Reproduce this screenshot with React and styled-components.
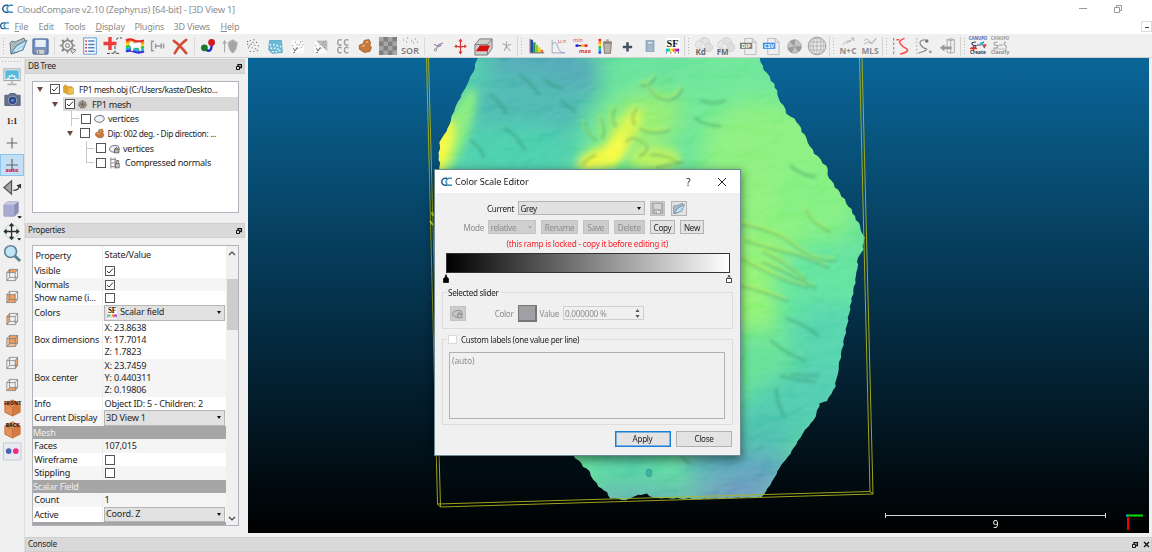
import React from 'react';
import styled, { createGlobalStyle, css } from 'styled-components';

const Global = createGlobalStyle`
  * { box-sizing: border-box; }
  body { margin: 0; background: #f0f0f0; overflow: hidden; font-family: "Noto Sans", "Open Sans", sans-serif; color: #262626; }
  svg { display: block; overflow: visible; }
  svg text { font-family: "Open Sans", "Noto Sans", sans-serif; }
`;

const Window = styled.div`
  width: 1152px; height: 552px; display: flex; flex-direction: column;
  overflow: hidden; background: #f0f0f0; white-space: nowrap;
`;
const TitleBar = styled.header`
  height: 18px; background: #fff; display: flex; align-items: center; padding-left: 2px;
  color: #8f8f8f; font-size: 9.4px; letter-spacing: -0.27px;
`;
const TitleText = styled.span`flex: 1; padding-left: 4px;`;
const WindowButtons = styled.div`
  display: flex; width: 80px; align-items: center; gap: 27px; padding-left: 6px; overflow: hidden;
  svg { flex: none; }
`;
const MenuBar = styled.nav`
  height: 16px; background: #fff; display: flex; align-items: center; color: #8c8c8c; font-size: 9px;
  letter-spacing: -0.2px;
`;
const MenuItem = styled.span`width: ${(p) => p.$w}px; u { text-underline-offset: 1px; }`;
const MdiButton = styled.span`
  margin-left: auto; width: 11px; height: 11px; border: 1px solid #dcdcdc; display: grid; place-items: center;
  i { width: 4px; height: 1px; background: #444; margin-top: 2px; }
`;
const ToolBar = styled.div`
  height: 24px; background: #f0f0f0; border-bottom: 1px solid #d0d0d0; display: flex; align-items: center;
`;
const Slot = styled.div`
  width: ${(p) => p.$w || 22.6}px; height: 22px; display: grid; place-items: center; flex: none; margin-top: 1px;
`;
const Divider = styled.i`width: 1px; height: 18px; background: #dadada; margin: 0 2px; flex: none;`;
const Grip = styled.i`
  width: ${(p) => p.$w || 9}px; height: 20px; flex: none; display: block;
  border-left: ${(p) => (p.$plain ? 'none' : '1px solid #d4d4d4')};
  background: repeating-linear-gradient(#b5b5b5 0 1px, transparent 1px 3px) 3px 2px / 1px 17px no-repeat;
`;

const Body = styled.main`flex: 1; display: flex; min-height: 0;`;
const SideBar = styled.aside`
  width: 25px; border-right: 1px solid #dedede; padding-top: 3px; display: flex; flex-direction: column; align-items: center;
  &::before { content: ""; width: 21px; height: 1px; margin-bottom: 4px; background: repeating-linear-gradient(90deg, #b5b5b5 0 1px, transparent 1px 3px); }
`;
const SideSlot = styled.div`
  width: ${(p) => (p.$on ? 24 : 20)}px; height: 22px; flex: none; display: grid; place-items: center;
  ${(p) => p.$on && css`background: #c3dff5; border: 1px solid #8cc4ec;`}
`;
const Right = styled.div`flex: 1; display: flex; flex-direction: column;`;
const Work = styled.div`height: 479px; display: flex;`;
const Docks = styled.section`width: 223px; padding-top: 1px; display: flex; flex-direction: column;`;
const DockHeader = styled.div`
  height: 15px; width: ${(p) => (p.$wide ? '100%' : '220px')}; background: #d9d9d9; border: 1px solid #cfcfcf;
  padding: 0 2px; font-size: 8.2px; letter-spacing: -0.3px; line-height: 1;
  display: flex; align-items: center; gap: 6px;
  span { flex: 1; }
`;
const TreeBox = styled.div`
  width: 207px; height: 132px; margin: 7px 0 10px 7px; background: #fff; border: 1px solid #b0b3bb;
`;
const TreeRow = styled.div`
  height: 14.7px; display: flex; align-items: center; padding-left: ${(p) => p.$indent}px;
  font-size: ${(p) => (p.$small ? 8.4 : 9.1)}px; letter-spacing: ${(p) => (p.$small ? -0.35 : -0.28)}px;
  background: ${(p) => (p.$sel ? `linear-gradient(90deg, #fff 30px, #d9d9d9 30px)` : 'none')};
  > svg { flex: none; }
`;
const Arrow = styled.i`
  width: 13px; flex: none;
  &::before { content: ""; display: block; width: 0; border: 3.5px solid transparent; border-top: 5px solid #6b4840; border-bottom: 0; }
`;
const Branch = styled.i`
  width: 10px; height: 15px; flex: none;
  background: linear-gradient(#c8c8c8, #c8c8c8) 0 0 / 1px ${(p) => (p.$end ? '8px' : '15px')} no-repeat,
    linear-gradient(#c8c8c8, #c8c8c8) 0 7px / 8px 1px no-repeat;
`;
const Box = styled.i`
  width: 10px; height: 10px; border: 1px solid #555; background: #fff; flex: none; display: grid; place-items: center;
`;
const TreeIcon = styled.span`width: ${(p) => p.$w || 14}px; margin: 0 0 0 3.5px; flex: none; display: grid; place-items: center start;`;
const PropBox = styled.div`
  width: 207px; height: 281px; margin: 7px 0 0 7px; background: #fff; border: 1px solid #b0b3bb;
  display: flex; overflow: hidden; font-size: 9.1px; letter-spacing: -0.2px;
`;
const PropTable = styled.div`width: 193px; padding-right: 0.5px;`;
const PropRow = styled.div`
  height: ${(p) => p.$h}px; display: grid; grid-template-columns: 70px 122px; align-items: center;
  background: ${(p) => (p.$alt ? '#f5f5f5' : '#fff')};
  > span { padding-left: ${(p) => (p.$head ? 2.5 : 1.2)}px; overflow: hidden; height: 100%; display: flex; align-items: center; border-right: 1px solid #ececec; }
`;
const PropValue = styled.div`padding: ${(p) => (p.$flush ? 0 : 1)}px 0 0 ${(p) => (p.$flush ? 0.5 : 1.6)}px; line-height: 12.4px;`;
const Section = styled.div`height: ${(p) => p.$h}px; background: #a6a6a6; color: #efefef; line-height: ${(p) => p.$h}px;`;
const Combo = styled.div`
  height: ${(p) => p.$h || 15}px; width: ${(p) => (p.$w ? `${p.$w}px` : '100%')}; flex: none;
  background: ${(p) => (p.$off ? '#cfcfcf' : '#e1e1e1')}; border: 1px solid ${(p) => (p.$off ? '#c4c4c4' : '#b5b5b5')};
  color: ${(p) => (p.$off ? '#8d8d8d' : 'inherit')};
  padding: 0 3px 0 1.5px; display: flex; align-items: center; gap: 2px;
  &::after { content: ""; margin-left: auto; border: 2.5px solid transparent; border-top: 3px solid ${(p) => (p.$off ? '#aaa' : '#111')}; border-bottom: 0; }
`;
const ScrollBar = styled.div`
  width: 12px; background: #f0f0f0; display: flex; flex-direction: column; align-items: center; padding: 5px 0 4px;
  justify-content: space-between;
  i { width: 11px; height: 51px; background: #cdcdcd; margin-bottom: 163px; }
`;
const View = styled.section`width: 901px; height: 475px; background: #000; overflow: hidden;`;

const Dialog = styled.div`
  position: absolute; left: 434px; top: 169px; width: 306.5px; height: 286.5px; background: #f0f0f0;
  border: 1px solid #6d8b92; box-shadow: 0 3px 9px 1px rgba(0, 0, 0, 0.45);
  font-size: 8.1px; letter-spacing: -0.3px; color: #1d1d1d;
`;
const DialogTitle = styled.div`
  height: 23px; background: #fff; display: flex; align-items: center; padding: 0 14px 0 6px; gap: 3px;
  font-size: 9.2px; letter-spacing: -0.12px;
  span { flex: 1; }
  b { font-weight: 400; font-size: 10px; margin-right: 24px; }
`;
const Line = styled.div`display: flex; align-items: center; height: ${(p) => p.$h}px; padding-left: ${(p) => p.$pl || 0}px; margin-top: ${(p) => p.$mt || 0}px;`;
const Label = styled.span`
  width: ${(p) => p.$w}px; flex: none; text-align: right; padding-right: 4px; color: ${(p) => (p.$off ? '#8d8d8d' : 'inherit')};
`;
const Button = styled.button`
  font: inherit; letter-spacing: inherit; padding: 0; flex: none; display: grid; place-items: center;
  width: ${(p) => p.$w}px; height: ${(p) => p.$h || 13.5}px; margin-left: ${(p) => p.$ml || 0}px;
  color: ${(p) => (p.$off ? '#8d8d8d' : '#1d1d1d')};
  background: ${(p) => (p.$off ? '#cccccc' : '#e3e3e3')};
  border: 1px solid ${(p) => (p.$off ? '#c2c2c2' : '#b2b2b2')};
  ${(p) => p.$primary && css`border: 1.6px solid #1a7fd6; box-shadow: inset 0 0 0 0.5px #1a7fd6;`}
`;
const Warning = styled.div`color: #fb1c26; text-align: center; height: 13px; line-height: 13px; margin-top: 3px; font-size: 8.2px; letter-spacing: -0.23px;`;
const Ramp = styled.div`
  height: 20px; margin: 3px 10px 0 11px; border: 1px solid #333; background: linear-gradient(90deg, #000, #fff);
`;
const Handles = styled.div`display: flex; justify-content: space-between; padding: 1px 8px 0; height: 10px;`;
const Group = styled.fieldset`
  margin: ${(p) => p.$mt}px 7px 0; height: ${(p) => p.$h}px; border: 1px solid #dcdcdc; padding: 0; min-width: 0;
  legend { margin-left: 4px; padding: 0 2px 0 1px; height: 10px; display: flex; align-items: center; gap: 4px; }
`;
const Check = styled.i`width: 9px; height: 9px; background: #fff; border: 1px solid #d8d8d8;`;
const Swatch = styled.i`width: 19px; height: 17px; background: #a0a0a4; border: 1px solid #777; border-width: 1px 2px 2px 1px; flex: none;`;
const Spin = styled.div`
  width: 81px; height: 14px; border: 1px solid #cfcfcf; color: #8d8d8d; padding: 0 3px 0 1px;
  display: flex; align-items: center; justify-content: space-between; font-size: 8.3px;
`;
const Area = styled.div`
  width: 276px; height: 67px; margin: 7px 0 0 6px; border: 1px solid #aeb0b8; padding: 2px; color: #8d8d8d; font-size: 8.5px;
  letter-spacing: -0.15px;
`;
const Footer = styled.div`display: flex; justify-content: flex-end; gap: 5.5px; padding: 6px 7.5px 0; `;

/* ---------- icons ---------- */
const I = ({ s = 18, children }) => (
  <svg width={s} height={s} viewBox="0 0 20 20" fill="none" stroke="#808080" strokeWidth="1">{children}</svg>
);
const Logo = ({ w = 11 }) => (
  <svg width={w} height={w * 0.86} viewBox="0 0 14 12" fill="none" strokeWidth="1.900">
    <path d="M8 1.500H5.500a4.500 4.500 0 0 0 0 9H8" stroke="#1f5c8c" />
    <path d="M14 1.500h-3a4.500 4.500 0 0 0 0 9h3" stroke="#3a8cbb" />
    <path d="M8 4H6.500M8 6H5.500M8 8H6.500" stroke="#5fa9d0" strokeWidth="1.200" />
  </svg>
);
const Tick = () => (
  <svg width="8" height="8" viewBox="0 0 8 8" fill="none" stroke="#333" strokeWidth="1"><path d="M1 4l2 2 4-4.5" /></svg>
);
const Restore = () => (
  <svg width="6" height="6" viewBox="0 0 6 6" fill="none" stroke="#111" strokeWidth="1"><path d="M2 2V.7h3.4v2.8H4" strokeWidth="1.3" /><path d="M.5 2.5h3v3h-3z" /></svg>
);
const Folder = ({ s = 20 }) => (
  <I s={s}>
    <path d="M2 7l2-2 3 1 9-4 1 3-7 11-7 2z" fill="#aebac1" stroke="#6d7d86" />
    <path d="M3 18l5-8 11-6-4 10z" fill="#a9d2ea" stroke="#5484a2" />
    <path d="M6 15l4-4 7-4M8 15l6-3" stroke="#e9f6fd" />
  </I>
);
const Disk = ({ off }) => (
  <I s={off ? 13 : 19}>
    <rect x="2" y="2" width="16" height="16" rx="1" fill={off ? '#b5b5b5' : '#6f93c4'} stroke={off ? '#999' : '#44638f'} />
    <rect x="4.500" y="3" width="11" height="7.500" fill={off ? '#d5d5d5' : '#e7eef6'} stroke="none" />
    <rect x="5.500" y="13" width="9" height="5" fill={off ? '#e5e5e5' : '#cdd3da'} stroke="#778" strokeWidth=".6" />
    <path d="M8 14.500v3" stroke="#567" />
  </I>
);
const Gear = () => (
  <I s={20}><circle cx="9.500" cy="9.500" r="5" strokeWidth="1.400" /><circle cx="9.500" cy="9.500" r="2" fill="#eee" />
    <path d="M9.500 1l1.800 3.500H7.700zM9.500 18l1.800-3.500H7.700zM1 9.500l3.500-1.800v3.600zM18 9.500l-3.500-1.800v3.600z" fill="#999" stroke="none" /><path d="M4 4l2 2M15 4l-2 2M4 15l2-2" strokeWidth="1.800" /><path d="M12 12l6 2-3.500 3.500z" fill="#ddd" /></I>
);
const List = () => (
  <I><rect x="3" y="1" width="14" height="18" fill="#f8fbff" stroke="#5a94cf" />
    <path d="M8 4.500h7M8 8.300h7M8 12h7M8 15.800h7" stroke="#4a84c6" strokeWidth="1.600" /><path d="M4.700 4.500h2M4.700 8.300h2M4.700 12h2M4.700 15.800h2" stroke="#d33" strokeWidth="1.800" /></I>
);
const AddPoint = () => (
  <I s={20}><path d="M7 1v13M.5 7.500h13" stroke="#ef3d3d" strokeWidth="3.400" /><path d="M13 3.500l2-1.500h4M12 10v7M4 17.500l8-.5 4 .5" stroke="#444" strokeDasharray="3 1.500" /></I>
);
const rainbow = ['#e22', '#f80', '#fd0', '#2b3', '#1bd', '#33d'];
const Sheep = () => (
  <I s={20}>{rainbow.map((c, i) => <path key={c} d={`M1 ${4.5 + i * 2.2}q4-2 8 0t10 0`} stroke={c} strokeWidth="2.3" />)}
    <path d="M4 6l3-1 2 2 6-1 2 2-1 3 .5 4h-2l-1-3H9l-1 3H6V11L4 9z" fill="#fff" stroke="#987" strokeWidth=".5" /></I>
);
const Merge = () => <I s={16}><path d="M5 4H2v12h3M7 7v6M6 10h9M17 7v6M14 7v6" strokeWidth="1.800" stroke="#9a9a9a" /></I>;
const Cross = () => <I s={19}><path d="M3 4q6 4 13 13M16 3Q9 8 4 17" stroke="#d05038" strokeWidth="2.800" strokeLinecap="round" /></I>;
const Spheres = () => (
  <I><path d="M6 13q8 6 8-4" stroke="#1430c8" strokeWidth="2.600" /><circle cx="6" cy="12" r="3.800" fill="#1c7a28" stroke="none" /><circle cx="14" cy="6" r="3.800" fill="#d31b1b" stroke="none" /></I>
);
const Shield = () => <I><path d="M8 6l5-3 5 3q0 8-5 12-5-4-5-12" fill="#a5a5a5" stroke="#b5b5b5" /><path d="M4 17V5M2.300 7.500L4 4l1.700 3.500" stroke="#999" /></I>;
const dots = [[7, 4], [11, 3], [14, 6], [4, 8], [8, 8], [12, 9], [16, 10], [5, 12], [9, 12], [13, 13], [7, 16], [11, 16], [15, 15], [4, 5], [10, 6], [6, 10]];
const Dots = () => <I>{dots.map(([x, y]) => <circle key={`${x}-${y}`} cx={x} cy={y} r=".75" fill="#777" stroke="none" />)}</I>;
const BlueDots = () => <I s={17}><path d="M3 3h14l1 14-12 1-4-4z" fill="#6cbad6" stroke="#58a5c4" />{dots.slice(3, 13).map(([x, y]) => <circle key={`${x}-${y}`} cx={x} cy={y} r="1" fill="#fff" stroke="none" />)}</I>;
const Scatter = ({ tri }) => (
  <I s={17}><path d="M3 3h15v15H3z" fill="#fafafa" stroke="none" />{tri && <path d="M5 3h13v13z" fill="#bcbcbc" stroke="none" />}
    <path d="M4 9h1M7 5h1M10 12h1M5 12l2 3 3-4M12 8h1M15 4h1M9 8h1M5 17h2M14 11h1M13 5h1M16 8h1" stroke="#777" strokeWidth="1.200" /></I>
);
const Word = ({ t, y = 15, size = 9, fill = '#777', weight = 600, children, font, s = 20 }) => (
  <I s={s}>{children}<text x="10" y={y} fontSize={size} fill={fill} stroke="none" textAnchor="middle" fontWeight={weight} style={font ? { fontFamily: font } : undefined}>{t}</text></I>
);
const CC = () => (
  <I>{[[3.5, 2.5], [11, 2.5], [3.5, 11], [11, 11]].map(([x, y]) => <path key={`${x}-${y}`} d={`M${x + 5} ${y + 1}q-4-2-4.500 2.500 .5 4.500 4.500 2.500`} stroke="#9a9a9a" strokeWidth="1.500" />)}</I>
);
const Pot = ({ s = 16 }) => <I s={s}><path d="M3 9l5-2 1-4 6-1 2 4-1 3 2 3-2 5-7 1-6-4z" fill="#c87a3c" stroke="#95552a" /><path d="M6 10l4-1M11 5l3 0" stroke="#eeb27c" strokeWidth="2" /></I>;
const Checker = () => (
  <I s={20}><rect x="1" y="1" width="18" height="18" fill="#808080" stroke="none" />
    {[0, 1, 2, 3].map((r) => [0, 1].map((c) => <rect key={`${r}${c}`} x={1 + 4.5 * (c * 2 + (r % 2))} y={1 + 4.5 * r} width="4.5" height="4.5" fill="#a6a6a6" stroke="none" />))}</I>
);
const Scissors = () => <I s={15}><path d="M7 13l3-5 6-3M4 7l6 3 4-2" stroke="#9a86aa" strokeWidth="1.500" /><circle cx="6" cy="14.500" r="1.600" stroke="#777" /></I>;
const Move = () => <I s={17}><path d="M10 3v14M4 10h12" stroke="#d63333" strokeWidth="1.300" /><path d="M10 .5L7.500 4h5zM10 19.500L7.500 16h5zM2.500 10L5.500 8v4zM17.500 10l-3-2v4z" fill="#d63333" stroke="none" /><path d="M4 8q6 6 12 0" stroke="#d63333" /></I>;
const CropBox = () => <I s={19}><path d="M1 8l5-6h13v10l-5 7H1z" stroke="#777" fill="#cfcfcf" /><path d="M1 8h13v11M14 8l5-6" stroke="#777" /><path d="M2 15l4-6h11l-3 6z" fill="#d80f0f" stroke="none" /></I>;
const Runner = () => <I s={15}><path d="M5 6l5 3 6-2M10 9l-3 7M10 10l5 6M10 3l0 7" stroke="#aaa" strokeWidth="1.500" /></I>;
const Hist = () => (
  <I s={17}>{[['#2440c0', 2, 3], ['#1a9a3a', 5, 6], ['#8c3', 8, 9], ['#ec1', 11, 12], ['#e62', 14, 15]].map(([c, y, x]) => <rect key={x} x={x} y={y} width="2.800" height={17 - y} fill={c} stroke="none" />)}<path d="M2.500 1v16.500H19" stroke="#445" /></I>
);
const MuSigma = () => <I s={17}><path d="M2.500 2v15.500H18" stroke="#99a" /><path d="M3 8q3-7 6 2t8 7" stroke="#7aa6cf" /><text x="14" y="5.500" fontSize="6.500" fill="#c66" stroke="none" textAnchor="middle">μ,σ</text></I>;
const MinMax = () => (
  <I s={17}><text x="6" y="4.500" fontSize="6" fontWeight="600" fill="#d66" stroke="none" textAnchor="middle">min</text>
    <path d="M3 9h3.500" stroke="#22d" strokeWidth="3" /><path d="M6.500 9h3.500" stroke="#222" strokeWidth="1.500" /><path d="M10 9h3.500" stroke="#fb1" strokeWidth="3" /><path d="M13.500 9H17" stroke="#e22" strokeWidth="3" />
    <text x="14" y="18" fontSize="6.500" fontWeight="700" fill="#d33" stroke="none" textAnchor="middle">max</text></I>
);
const TrashBar = () => <I s={17}>{rainbow.map((c, i) => <rect key={c} x="3" y={1 + i * 2.900} width="3" height="2.900" fill={c} stroke="none" />)}<path d="M9 6h9l-1 12h-7zM8.500 4.500h10M12 2.500h3" fill="#bcb3ab" stroke="#8a8078" strokeWidth="1.300" /></I>;
const Plus = () => <I s={17}><path d="M10 5v11M4.500 10.500h11" stroke="#43525f" strokeWidth="3" /></I>;
const Calc = () => <I s={16}><rect x="5" y="3" width="10" height="14" fill="#93aac0" stroke="#95a5b5" /><path d="M7 6h6" stroke="#cfe4f2" strokeWidth="2.500" /><path d="M7 10h6M7 12.500h6M7 15h6" stroke="#eee" strokeDasharray="1.300 1" /></I>;
const SF = ({ s = 17 }) => (
  <I s={s}><rect x="2" y="0" width="16" height="20" fill="#fff" stroke="none" />
    <text x="10" y="10.500" fontSize="12" fontWeight="700" fill="#111" stroke="none" textAnchor="middle" style={{ fontFamily: '"Liberation Serif", serif' }}>SF</text>
    {['#1bd', '#1d8', '#fe0', '#f70', '#e2a', '#62d'].map((c, i) => <rect key={c} x={2.2 + i * 2.600} y="12.500" width="2.600" height="3.500" fill={c} stroke="none" />)}<path d="M3 16.500v2M8 16.500v2M13 16.500v2M17 16.500v2" stroke="#555" /></I>
);
const Bubble = ({ t }) => (
  <I s={19}><circle cx="11" cy="6" r="5.500" fill="#e2e2e2" stroke="#cfcfcf" /><circle cx="5.500" cy="8" r="4" fill="#e8e8e8" stroke="#d2d2d2" /><circle cx="15" cy="11" r="4.500" fill="#dedede" stroke="#cdcdcd" /><circle cx="9" cy="10" r="3" fill="#ececec" stroke="#d6d6d6" />
    <text x="7" y="19" fontSize="8.500" fontWeight="700" fill="#6a6a6a" stroke="none" textAnchor="middle">{t}</text></I>
);
const Doc = ({ t, c }) => (
  <I s={19}><path d="M6 1.500h8l4 4v13H6z" fill="#efefef" stroke="#bbb" /><path d="M14 1.500v4h4" stroke="#bbb" /><rect x="1" y="6" width="13" height="6.500" fill={c} stroke="none" /><text x="7.500" y="11.400" fontSize="5.800" fontWeight="700" fill="#fff" stroke="none" textAnchor="middle">{t}</text></I>
);
const Pie = () => <I s={17}><circle cx="10" cy="10" r="8" fill="#c2c2c2" stroke="#aaa" /><path d="M10 10L4.500 4.500A8 8 0 0 1 11 2zM10 10l8-1a8 8 0 0 1-3.500 7.500zM10 10l-3 7.500a8 8 0 0 1-5-6z" fill="#9b9b9b" stroke="none" /></I>;
const Globe = () => <I s={20}><circle cx="10" cy="10" r="8.800" fill="#e9e9e9" stroke="#9a9a9a" /><path d="M1.500 10h17M10 1.500v17M3 6h14M3 14h14" stroke="#aaa" strokeWidth=".8" /><ellipse cx="10" cy="10" rx="4" ry="8.500" stroke="#aaa" strokeWidth=".8" /><ellipse cx="10" cy="10" rx="6.800" ry="8.500" stroke="#aaa" strokeWidth=".6" /></I>;
const NC = ({ t }) => <Word t={t} y={18} size={8.4} fill="#8e8e8e" weight={700}><path d={t === 'MLS' ? 'M4 5q3-4 5 0t7-3M4 8l4-2 4 2 4-5' : 'M5 9q2-5 8-4M8 8l8-6M13 2h3v3'} stroke="#aaa" strokeWidth=".8" /></Word>;
const SCurve = () => <I><path d="M3 1v18" stroke="#777" strokeDasharray="3 2" /><path d="M6 3h3M15 1.500Q8 4 10 7t7 6-7 6" stroke="#f44" strokeWidth="1.600" /></I>;
const SDots = () => <I><path d="M2 1v18" stroke="#aaa" strokeDasharray="2 2" /><path d="M11 3Q4 4 6 8t6 5-8 5" stroke="#8d8d8d" strokeWidth="1.500" /><circle cx="13" cy="4.500" r="2" fill="#777" stroke="none" /><circle cx="17" cy="16.500" r="1.600" fill="#999" stroke="none" /></I>;
const Unroll = () => <I><path d="M9 3q4-2 8 0v14q-4 2-8 0zM13 2v16M9 3q4 2 8 0" stroke="#a5a5a5" /><path d="M1 12l5-4v2.500h8v3H6V16z" fill="#999" stroke="none" /></I>;
const Canupo = ({ t, on }) => (
  <I s={20}><text x="10" y="4" fontSize="4.300" fontWeight="700" fill={on ? '#4468b0' : '#999'} stroke="none" textAnchor="middle">CANUPO</text>
    <path d="M8 6Q3 6 4 8t4 1.500Q8 13 3 12M9 9h4M16 6q-3 1-1 3t1 3" stroke={on ? '#446' : '#a5a5a5'} strokeWidth="1.200" />
    {on ? <><path d="M2 12.500h7M5.500 10v5" stroke="#d33" strokeWidth="1.500" /><circle cx="13.500" cy="7.500" r="1.600" fill="#2bd" stroke="none" /><circle cx="17" cy="9.500" r="1.400" fill="#e44" stroke="none" /></> : <path d="M3 13h14" stroke="#bbb" />}
    <text x="10" y="18" fontSize="4.800" fontWeight="700" fill={on ? '#334' : '#8c8c8c'} stroke="none" textAnchor="middle">{t}</text></I>
);

const Monitor = () => <I s={18}><rect x="1" y="1" width="18" height="13" fill="#fff" stroke="#999" /><rect x="2.500" y="2.500" width="15" height="10" fill="#55b9dc" stroke="none" /><path d="M6 12.500a4 4 0 0 1 8 0" stroke="#fff" strokeWidth="2.400" strokeDasharray="1.800 .8" /><path d="M10 14v3M5 18.200h10" strokeWidth="1.800" stroke="#b5b5b5" /></I>;
const Camera = () => <I s={17}><path d="M1 5h4l2-2h6l2 2h4v12H1z" fill="#65718a" stroke="#535e76" /><circle cx="10" cy="11" r="4.800" fill="#2a4683" stroke="#aab4c4" /><circle cx="10" cy="11" r="2" fill="#5a86d8" stroke="none" /></I>;
const Target = ({ auto }) => <I s={auto ? 20 : 18}><path d="M10 4v12M4 10h12" stroke="#666" strokeWidth="1.200" />{auto && <text x="10" y="17" fontSize="5.400" fontWeight="800" fill="#d8222a" stroke="none" textAnchor="middle">auto</text>}</I>;
const Flip = () => <I s={19}><path d="M1 10l8-7v14z" fill="#a5a5a5" stroke="#555" strokeWidth="1.300" /><path d="M11 13q5 0 6-4" stroke="#333" strokeWidth="1.300" /><path d="M14 8l5-2v5z" fill="#333" stroke="none" /></I>;
const Cube3 = () => <I s={19}><path d="M1 5l4-3h11v11l-4 4H1z" fill="#a9abd0" stroke="#9b9dc2" /><path d="M1 5l4-3h11l-4 3z" fill="#c8cae4" stroke="none" /><path d="M12 5l4-3v11l-4 4z" fill="#8b8db4" stroke="none" /><path d="M15 17h5l-2.500 2.500z" fill="#000" stroke="none" /></I>;
const Pan = () => <I s={19}><circle cx="9" cy="10" r="7.500" stroke="#cbe6d0" strokeWidth="1.500" fill="#f4f0f6" /><path d="M9 2v16M1.500 10h15M7 4.500L9 2l2 2.500M7 15.500L9 18l2-2.500M4 8l-2.500 2L4 12M14 8l2.500 2-2.500 2" stroke="#2c2c2c" strokeWidth="1.400" /><path d="M15 17h4l-2 2.500z" fill="#000" stroke="none" /></I>;
const Zoom = () => <I s={19}><path d="M12 12l6 6" stroke="#5b8092" strokeWidth="3" /><circle cx="8" cy="8" r="6.200" fill="#bfe6f5" stroke="#5f8496" strokeWidth="1.700" /></I>;
const faces = {
  top: 'M4 7l3-4h10l-3 4z', front: 'M4 7h10v10H4z', left: 'M4 7l3-4v10l-3 4z', back: 'M7 3h10v10H7z', right: 'M14 7l3-4v10l-3 4z', bottom: 'M4 17l3-4h10l-3 4z',
};
const ViewCube = ({ face }) => (
  <I s={16}><path d={faces[face]} fill="#f0a064" stroke="none" />{face === 'back' && <path d="M4 7h10v10H4z" fill="#e9995a" opacity=".6" stroke="none" />}
    <path d="M3.500 7h10.500v10H3.500zM7 3h10v10H7zM3.500 7L7 3M14 7l3-4M14 17l3-4M3.500 17L7 13" stroke="#777" strokeWidth=".9" /></I>
);
const Orange = ({ t }) => (
  <I s={19}><path d="M10 2l8 4v9l-8 4-8-4V6z" fill="#e58f55" stroke="#c27240" /><path d="M10 10l8-4v9l-8 4z" fill="#d27c42" stroke="none" /><path d="M10 10v9M2 6l8 4 8-4" stroke="#c27240" /><text x="10" y="7" fontSize="5.300" fontWeight="800" fill="#3a2a20" stroke="none" textAnchor="middle">{t}</text></I>
);
const Stereo = () => <I s={19}><rect x=".5" y="1" width="18.500" height="18" rx="1" fill="#e8ebf2" stroke="#c2c8d2" /><circle cx="6" cy="9.500" r="3" fill="#4468b6" stroke="none" /><circle cx="13.500" cy="9.500" r="3" fill="#ee2a82" stroke="none" /></I>;

const YellowFolder = () => <I s={11}><path d="M1 4l3-3 5 4h7l3 3v10l-9 1-9-4z" fill="#dfa62e" stroke="#b58a22" /><path d="M9 8l10-1v10l-9 1z" fill="#efbf50" stroke="none" /></I>;
const MeshIcon = () => <I s={9}><path d="M10 1l7 4 2 7-5 6H6l-5-6 2-7z" fill="#b39e90" stroke="#666" /><path d="M10 1l0 9 9 2M10 10l4 8M10 10l-4 8M10 10l-9 2M10 10L3 5M10 10l7-5" stroke="#555" strokeWidth="1.400" /></I>;
const Cloud = ({ lock, off }) => <I s={11}><path d="M5 16q-5-2-4-6 1-4 6-5 6-2 10 1 3 4 1 7-3 4-8 4z" fill={off ? '#c5c5c5' : '#eef3f8'} stroke={off ? '#888' : '#556'} strokeWidth="1.500" />{lock && <path d="M10 11h8v7h-8zM12 11q0-6 4 0" fill="#bbb" stroke={off ? '#888' : '#555'} strokeWidth="1.500" />}</I>;
const Normals = () => <I s={12}><path d="M3 1v18M10 1v18M3 4h9M3 10h9M3 16h9" strokeWidth="2" stroke="#999" /><path d="M11 11h6v7h-6zM12 11V6h4v5" fill="#ccc" stroke="#666" strokeWidth="1.500" /></I>;

/* ---------- 3D view ---------- */
const outline = [
  [480, 50], [473, 72], [465, 88], [455, 108], [448, 128], [440, 142], [439, 156], [440, 175], [436, 215], [434, 240], [445, 300], [480, 360], [520, 400],
  [573, 455], [589, 472], [598, 487], [604, 490], [611, 498], [626, 500], [638, 495], [646, 494], [654, 498], [700, 499], [762, 497],
  [772, 482], [780, 467], [790, 454], [800, 438], [805, 430], [814, 420], [820, 403], [827, 401], [835, 387], [838, 370], [847, 325], [852, 298], [857, 272], [858, 258],
  [863, 250], [864, 238], [860, 226], [853, 213], [842, 196], [829, 178], [826, 166], [812, 150], [806, 138], [797, 122], [787, 113], [779, 98], [774, 84], [762, 66], [758, 50],
];
const jagged = outline.flatMap(([x, y], i) => {
  const [nx, ny] = outline[(i + 1) % outline.length];
  const n = Math.max(1, Math.round(Math.hypot(nx - x, ny - y) / 4));
  return Array.from({ length: n }, (_, k) => {
    const j = Math.sin(i * 7.3 + k * 4.1) * 0.8;
    return `${(x + ((nx - x) * k) / n + j).toFixed(1)},${(y + ((ny - y) * k) / n - j * 0.6).toFixed(1)}`;
  });
}).join(' ');

const patches = [
  ['#49cfa6', 490, 140, 90, 110, 0], ['#4aa3b4', 545, 68, 60, 36, 12], ['#46b5ae', 525, 108, 60, 36, 0], ['#42cda8', 515, 150, 50, 26, 0],
  ['#82ec78', 455, 135, 12, 50, 22], ['#f4fa3c', 438, 150, 13, 34, 20], ['#5fe096', 665, 75, 60, 26, 0], ['#66e592', 750, 90, 70, 60, 0],
  ['#92ee6c', 640, 125, 46, 30, -30], ['#d8f648', 625, 132, 28, 10, -58], ['#f2f83a', 600, 158, 24, 10, -20], ['#f8fb3a', 616, 150, 18, 7, -60], ['#b4f25a', 655, 158, 26, 12, 0],
  ['#86ef78', 775, 170, 80, 65, 35], ['#88f076', 770, 240, 60, 70, 0], ['#7def7c', 815, 200, 36, 45, -30], ['#8ef370', 748, 300, 36, 50, 0],
  ['#5ce29a', 820, 290, 45, 50, 0], ['#4ed2a8', 830, 355, 45, 55, 0], ['#5ee090', 755, 370, 38, 40, 0], ['#4ac9ac', 795, 405, 60, 32, -20],
  ['#45bda9', 755, 432, 50, 18, 0], ['#509fbb', 740, 465, 60, 18, 0], ['#6a86c4', 738, 492, 50, 14, -8], ['#48c8a4', 630, 464, 40, 16, 0], ['#5590bb', 640, 500, 70, 9, 0],
];
const creases = [
  'M648 86q6 12 18 14 14-1 16-12', 'M655 77q-4 10-14 8', 'M615 108q-6 14 2 18', 'M637 108q-8 9-2 17', 'M640 128q10 8 30 2', 'M600 118q6 10 2 20', 'M584 122q4 14 12 18',
  'M625 142q8-8 18 0t-4 14', 'M650 155q15-2 30 8', 'M655 168q12-4 28-6', 'M582 165q6-8 14-10',
  'M735 224q38 4 60 22t42 14', 'M745 240q20 8 40 12t44 16', 'M762 262q20 8 54 26', 'M738 256q30 20 70 32', 'M738 285q24 6 50 16', 'M805 210q10 16 26 22', 'M762 252q18 6 44 28',
  'M790 374q16 2 30 2', 'M780 376q12 3 36 6', 'M776 388q2 18 8 28', 'M785 318q20 6 34 18', 'M770 340q20 16 34 20', 'M545 80q10 8 18 8', 'M520 75q14 12 20 20', 'M505 128q14 10 20 22', 'M470 140q12 8 14 18',
  'M680 455q8 8 12 10', 'M790 165q10 10 26 12', 'M700 100q14 6 26 0', 'M695 118q10 8 26 8', 'M560 100q10 8 16 12', 'M490 95q12 8 16 18',
];
const Scene = () => (
  <svg width="901" height="475" viewBox="248 58 901 475">
    <defs>
      <linearGradient id="sky" x1="0" y1="0" x2="0" y2="1"><stop offset="0" stopColor="#0a6699" /><stop offset=".5" stopColor="#05334d" /><stop offset="1" stopColor="#000" /></linearGradient>
      <clipPath id="mesh"><polygon points={jagged} /></clipPath>
      <filter id="soft" x="-60%" y="-100%" width="220%" height="300%"><feGaussianBlur stdDeviation="12" /></filter>
      <filter id="tight" x="-80%" y="-150%" width="260%" height="400%"><feGaussianBlur stdDeviation="5" /></filter>
      <filter id="crease" x="-5%" y="-5%" width="110%" height="110%"><feGaussianBlur stdDeviation="1.5" /></filter>
      <filter id="relief" x="0" y="0" width="100%" height="100%">
        <feTurbulence type="fractalNoise" baseFrequency="0.03 0.055" numOctaves="3" seed="8" />
        <feDiffuseLighting surfaceScale="6" lightingColor="#fff"><feDistantLight azimuth="225" elevation="50" /></feDiffuseLighting>
      </filter>
    </defs>
    <rect x="248" y="58" width="901" height="475" fill="url(#sky)" />
    <g clipPath="url(#mesh)">
      <rect x="430" y="50" width="440" height="455" fill="#5fe096" />
      {patches.map(([c, x, y, rx, ry, a], i) => (
        <ellipse key={i} cx={x} cy={y} rx={rx} ry={ry} fill={c} transform={`rotate(${a} ${x} ${y})`} filter={rx < 30 ? 'url(#tight)' : 'url(#soft)'} />
      ))}
      <rect x="430" y="50" width="440" height="455" filter="url(#relief)" opacity=".26" style={{ mixBlendMode: 'soft-light' }} />
      <g fill="none" filter="url(#crease)">
        {creases.map((d) => <path key={d} d={d} stroke="#2f7a55" strokeWidth="2.600" opacity=".34" />)}
        {creases.slice(0, 18).map((d) => <path key={d} d={d} stroke="#d0f85a" strokeWidth="2.400" opacity=".36" transform="translate(-2 -3)" />)}
      </g>
      <ellipse cx="649" cy="473" rx="3" ry="4" fill="#2f96a2" stroke="#357f8e" opacity=".6" />
    </g>
    <g fill="none" stroke="#b0b41a" strokeWidth=".9">
      <path d="M426.500 58L437.500 504 870 491.500 859.500 58" /><path d="M428.500 58L440.500 507 873 494 862 58" /><path d="M437.500 504l3 3M870 491.500l3 2.500" />
    </g>
    <path d="M430 221l3 4M432 212l1 4" stroke="#cfe03a" strokeWidth="2" />
    <path d="M885.500 513v5M885.500 515.500h220M1105.500 513v5" stroke="#d5d5d5" fill="none" />
    <text x="995.500" y="528" fontSize="10" fill="#fff" textAnchor="middle">9</text>
    <path d="M1127 515.500h16" stroke="#00e000" strokeWidth="2" /><path d="M1128 517v13" stroke="#f00000" strokeWidth="2" /><path d="M1126 515.500h2" stroke="#0af" strokeWidth="2" />
  </svg>
);

const Icons = ({ items, w }) => items.map((el, i) => <Slot key={i} $w={w}>{el}</Slot>);

const menus = [['F', 'ile', 24], ['', 'Edit', 26], ['', 'Tools', 31], ['D', 'isplay', 39], ['', 'Plugins', 39], ['', '3D Views', 47], ['H', 'elp', 22]];

const Chevron = ({ up }) => <svg width="8" height="5" viewBox="0 0 8 5" fill="none" stroke="#444" strokeWidth="1.200"><path d={up ? 'M1 4l3-3 3 3' : 'M1 1l3 3 3-3'} /></svg>;

export default function App() {
  return (
    <Window>
      <Global />
      <TitleBar>
        <Logo /><TitleText>CloudCompare v2.10 (Zephyrus) [64-bit] - [3D View 1]</TitleText>
        <WindowButtons>
          <svg width="9" height="8" stroke="#999"><path d="M1 3.500h8" /></svg>
          <svg width="9" height="9" fill="none" stroke="#999"><path d="M.5 2.500h5v5h-5zM2.500 2.500V.5h5v5h-2" /></svg>
          <svg width="8" height="8" stroke="#888"><path d="M4 0l5 8M9 0L4 8" /></svg>
        </WindowButtons>
      </TitleBar>
      <MenuBar>
        <MenuItem $w={14.500}><Logo w={9} /></MenuItem>
        {menus.map(([u, t, w]) => <MenuItem key={t} $w={w}><u>{u}</u>{t}</MenuItem>)}
        <MdiButton><i /></MdiButton>
      </MenuBar>
      <ToolBar>
        <Grip $w={6.500} $plain />
        <Icons items={[<Folder />, <Disk />]} />
        <Divider />
        <Icons w={22.500} items={[<Gear />, <List />, <AddPoint />, <Sheep />, <Merge />, <Cross />]} />
        <Divider />
        <Icons w={22.500} items={[<Spheres />, <Shield />, <Dots />, <BlueDots />, <Scatter />, <Scatter tri />, <CC />, <Pot />, <Checker />,
          <Word t="SOR" y={18} size={9}><path d="M3 4h1M7 2h1M11 5h1M15 3h1M6 6h1M13 7h1M17 6h1" /></Word>]} />
        <Divider />
        <Icons w={22.700} items={[<Scissors />, <Move />, <CropBox />, <Runner />]} />
        <Grip $w={7.500} />
        <Icons w={22.700} items={[<Hist />, <MuSigma />, <MinMax />, <TrashBar />, <Plus />, <Calc />, <SF />]} />
        <Grip $w={8} />
        <Icons w={22.800} items={[<Bubble t="Kd" />, <Bubble t="FM" />, <Doc t="DIP" c="#808080" />, <Doc t="CSV" c="#3a90e6" />, <Pie />, <Globe />]} />
        <Grip $w={8} />
        <Icons w={22.500} items={[<NC t="N+C" />, <NC t="MLS" />]} />
        <Grip $w={6} />
        <Icons w={24} items={[<SCurve />, <SDots />, <Unroll />]} />
        <Grip $w={7} />
        <Icons w={22.500} items={[<Canupo t="Create" on />, <Canupo t="Classify" />]} />
      </ToolBar>
      <Body>
        <SideBar>
          {[<Monitor />, <Camera />, <Word t="1:1" y={13} size={8} fill="#2a0e2e" weight={700} font='"Liberation Serif", serif' />, <Target />, <Target auto />, <Flip />, <Cube3 />, <Pan />, <Zoom />,
            ...Object.keys(faces).map((f) => <ViewCube face={f} />), <Orange t="FRONT" />, <Orange t="BACK" />, <Stereo />].map((el, i) => (
            <SideSlot key={i} $on={i === 4}>{el}</SideSlot>
          ))}
        </SideBar>
        <Right>
          <Work>
            <Docks>
              <DockHeader><span>DB Tree</span><Restore /></DockHeader>
              <TreeBox>
                <TreeRow $indent={3.500} $small><Arrow /><Box><Tick /></Box><TreeIcon $w={16}><YellowFolder /></TreeIcon><span>FP1 mesh.obj (C:/Users/kaste/Deskto...</span></TreeRow>
                <TreeRow $indent={18.500} $sel><Arrow /><Box><Tick /></Box><TreeIcon><MeshIcon /></TreeIcon><span>FP1 mesh</span></TreeRow>
                <TreeRow $indent={37.500}><Branch /><Box /><TreeIcon><Cloud /></TreeIcon><span>vertices</span></TreeRow>
                <TreeRow $indent={34} $small><Arrow /><Box /><TreeIcon><Pot s={11} /></TreeIcon><span>Dip: 002 deg. - Dip direction: ...</span></TreeRow>
                <TreeRow $indent={52.500}><Branch /><Box /><TreeIcon><Cloud lock /></TreeIcon><span>vertices</span></TreeRow>
                <TreeRow $indent={52.500}><Branch $end /><Box /><TreeIcon $w={16}><Normals /></TreeIcon><span>Compressed normals</span></TreeRow>
              </TreeBox>
              <DockHeader><span>Properties</span><Restore /></DockHeader>
              <PropBox>
                <PropTable>
                  <PropRow $h={18} $head><span>Property</span><PropValue>State/Value</PropValue></PropRow>
                  <PropRow $h={13.500}><span>Visible</span><PropValue><Box><Tick /></Box></PropValue></PropRow>
                  <PropRow $h={13.500} $alt><span>Normals</span><PropValue><Box><Tick /></Box></PropValue></PropRow>
                  <PropRow $h={13.500}><span>Show name (i...</span><PropValue><Box /></PropValue></PropRow>
                  <PropRow $h={16} $alt><span>Colors</span><PropValue $flush><Combo $h={16}><SF s={12} />Scalar field</Combo></PropValue></PropRow>
                  <PropRow $h={38}><span>Box dimensions</span><PropValue>X: 23.8638<br />Y: 17.7014<br />Z: 1.7823</PropValue></PropRow>
                  <PropRow $h={38} $alt><span>Box center</span><PropValue>X: 23.7459<br />Y: 0.440311<br />Z: 0.19806</PropValue></PropRow>
                  <PropRow $h={13.500}><span>Info</span><PropValue>Object ID: 5 - Children: 2</PropValue></PropRow>
                  <PropRow $h={15.500} $alt><span>Current Display</span><PropValue $flush><Combo $h={15.500}>3D View 1</Combo></PropValue></PropRow>
                  <Section $h={13}>Mesh</Section>
                  <PropRow $h={14} $alt><span>Faces</span><PropValue>107,015</PropValue></PropRow>
                  <PropRow $h={13.500}><span>Wireframe</span><PropValue><Box /></PropValue></PropRow>
                  <PropRow $h={13.500} $alt><span>Stippling</span><PropValue><Box /></PropValue></PropRow>
                  <Section $h={13}>Scalar Field</Section>
                  <PropRow $h={14} $alt><span>Count</span><PropValue>1</PropValue></PropRow>
                  <PropRow $h={15.500}><span>Active</span><PropValue $flush><Combo $h={15.500}>Coord. Z</Combo></PropValue></PropRow>
                  <Section $h={4} />
                </PropTable>
                <ScrollBar><Chevron up /><i /><Chevron /></ScrollBar>
              </PropBox>
            </Docks>
            <View><Scene /></View>
          </Work>
          <DockHeader $wide><span>Console</span><Restore /><svg width="5" height="5" stroke="#111" strokeWidth="1.300"><path d="M0 0l5 5M5 0L0 5" /></svg></DockHeader>
        </Right>
      </Body>
      <Dialog>
        <DialogTitle><Logo /><span>Color Scale Editor</span><b>?</b><svg width="8" height="8" stroke="#222"><path d="M0 0l8 8M8 0L0 8" /></svg></DialogTitle>
        <Line $h={15} $mt={7.500}>
          <Label $w={83}>Current</Label><Combo $w={127} $h={14}>Grey</Combo>
          <Button $w={15} $h={15} $ml={5} $off><Disk off /></Button><Button $w={16} $h={15} $ml={5.500}><Folder s={13} /></Button>
        </Line>
        <Line $h={14} $mt={4.500}>
          <Label $w={53} $off>Mode</Label><Combo $w={48} $h={13.500} $off>relative</Combo>
          <Button $off $w={37} $ml={5}>Rename</Button><Button $off $w={25.500} $ml={5}>Save</Button><Button $off $w={30.500} $ml={5.500}>Delete</Button>
          <Button $w={25} $ml={5.500}>Copy</Button><Button $w={24} $ml={5}>New</Button>
        </Line>
        <Warning>(this ramp is locked - copy it before editing it)</Warning>
        <Ramp />
        <Handles>
          <svg width="6" height="9"><path d="M.5 8.500v-4l1.500-1L3 .5l1 3 1.500 1v4z" fill="#000" stroke="#000" strokeWidth=".7" /></svg>
          <svg width="6" height="9"><path d="M.5 8.500v-4h5v4zM1.500 4.500L3 1l1.500 3.500" fill="#fff" stroke="#333" strokeWidth=".9" /></svg>
        </Handles>
        <Group $mt={4.500} $h={41}>
          <legend>Selected slider</legend>
          <Line $h={17} $mt={7} $pl={7}>
            <Button $off $w={15.500} $h={15}><Cloud lock off /></Button><Label $off $w={52}>Color</Label><Swatch /><Label $off $w={26.500}>Value</Label>
            <Spin>0.000000 %<svg width="5" height="9" fill="#555"><path d="M.5 3L2.500 0l2 3zM.5 6l2 3 2-3z" /></svg></Spin>
          </Line>
        </Group>
        <Group $mt={6} $h={90}>
          <legend><Check />Custom labels (one value per line)</legend>
          <Area>(auto)</Area>
        </Group>
        <Footer><Button $primary $w={56} $h={16}>Apply</Button><Button $w={56} $h={16}>Close</Button></Footer>
      </Dialog>
    </Window>
  );
}
